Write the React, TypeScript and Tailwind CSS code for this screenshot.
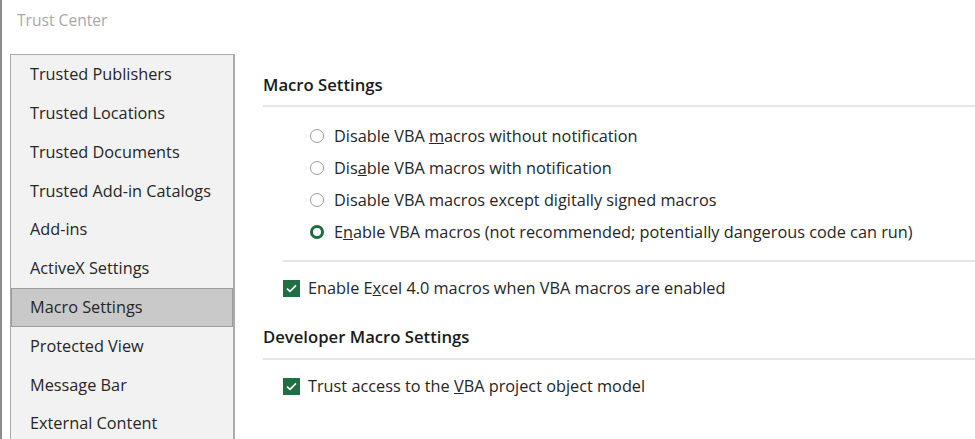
import React from 'react';

const font = { fontFamily: '"Open Sans", "Noto Sans", sans-serif' };

const navItems = [
  'Trusted Publishers',
  'Trusted Locations',
  'Trusted Documents',
  'Trusted Add-in Catalogs',
  'Add-ins',
  'ActiveX Settings',
  'Macro Settings',
  'Protected View',
  'Message Bar',
  'External Content',
];

const Radio = ({ checked }: { checked?: boolean }) =>
  checked ? (
    <span className="box-border h-[14px] w-[14px] shrink-0 rounded-full border-[3.5px] border-[#1d6b3c] bg-white" />
  ) : (
    <span className="box-border h-[14px] w-[14px] shrink-0 rounded-full border border-[#9a9a9a] bg-white" />
  );

const Checkbox = () => (
  <span className="flex h-[17px] w-[17px] shrink-0 items-center justify-center bg-[#1f6f42]">
    <svg width="11" height="9" viewBox="0 0 11 9" fill="none">
      <path d="M1 4.6 L4 7.4 L10 1.4" stroke="white" strokeWidth="1.6" />
    </svg>
  </span>
);

const radios: { label: React.ReactNode; checked?: boolean }[] = [
  {
    label: (
      <>
        Disable VBA <u>m</u>acros without notification
      </>
    ),
  },
  {
    label: (
      <>
        Dis<u>a</u>ble VBA macros with notification
      </>
    ),
  },
  {
    label: (
      <>
        Disable VBA macros except di<u>g</u>itally signed macros
      </>
    ),
  },
  {
    label: (
      <>
        E<u>n</u>able VBA macros (not recommended; potentially dangerous code can run)
      </>
    ),
    checked: true,
  },
];

export default function App() {
  return (
    <div
      className="h-[439px] w-[975px] overflow-hidden border-l-2 border-[#8c8c8c] bg-white text-[16.3px] text-[#262626]"
      style={font}
    >
      <div className="flex h-[54px] items-start pl-[15px] pt-[9px] text-[15.6px] text-[#a8a8a8]">
        Trust Center
      </div>
      <div className="flex items-start">
        {/* sidebar */}
        <div className="ml-[8px] h-[400px] w-[225px] shrink-0 border border-r-2 border-[#ababab] bg-[#f2f2f2]">
          {navItems.map((item) => (
            <div
              key={item}
              className={
                item === 'Macro Settings'
                  ? 'flex h-[38.8px] items-center border border-[#9c9c9c] bg-[#c9c9c9] pl-[18px]'
                  : 'flex h-[38.8px] items-center border border-transparent pl-[18px]'
              }
            >
              {item}
            </div>
          ))}
        </div>

        {/* main */}
        <div className="flex-1 pl-[28px] pt-[20px]">
          <div className="flex h-[22px] items-center text-[16.7px] font-semibold text-[#1a1a1a]">
            Macro Settings
          </div>
          <div className="mt-[9px] h-[2px] bg-[#e6e6e6]" />
          <div className="flex flex-col pt-[13px]">
            {radios.map((r, i) => (
              <div key={i} className="flex h-[32px] items-center gap-[10px] pl-[47px]">
                <Radio checked={r.checked} />
                <span>{r.label}</span>
              </div>
            ))}
          </div>
          <div className="ml-[20px] mt-[12px] h-[2px] bg-[#e6e6e6]" />
          <div className="flex h-[52px] items-center gap-[8px] pl-[20px]">
            <Checkbox />
            <span>
              Enable E<u>x</u>cel 4.0 macros when VBA macros are enabled
            </span>
          </div>
          <div className="mt-[12px] flex h-[22px] items-center text-[16.7px] font-semibold text-[#1a1a1a]">
            Developer Macro Settings
          </div>
          <div className="mt-[10px] h-[2px] bg-[#e6e6e6]" />
          <div className="flex h-[52px] items-center gap-[8px] pl-[20px]">
            <Checkbox />
            <span>
              Trust access to the <u>V</u>BA project object model
            </span>
          </div>
        </div>
      </div>
    </div>
  );
}
